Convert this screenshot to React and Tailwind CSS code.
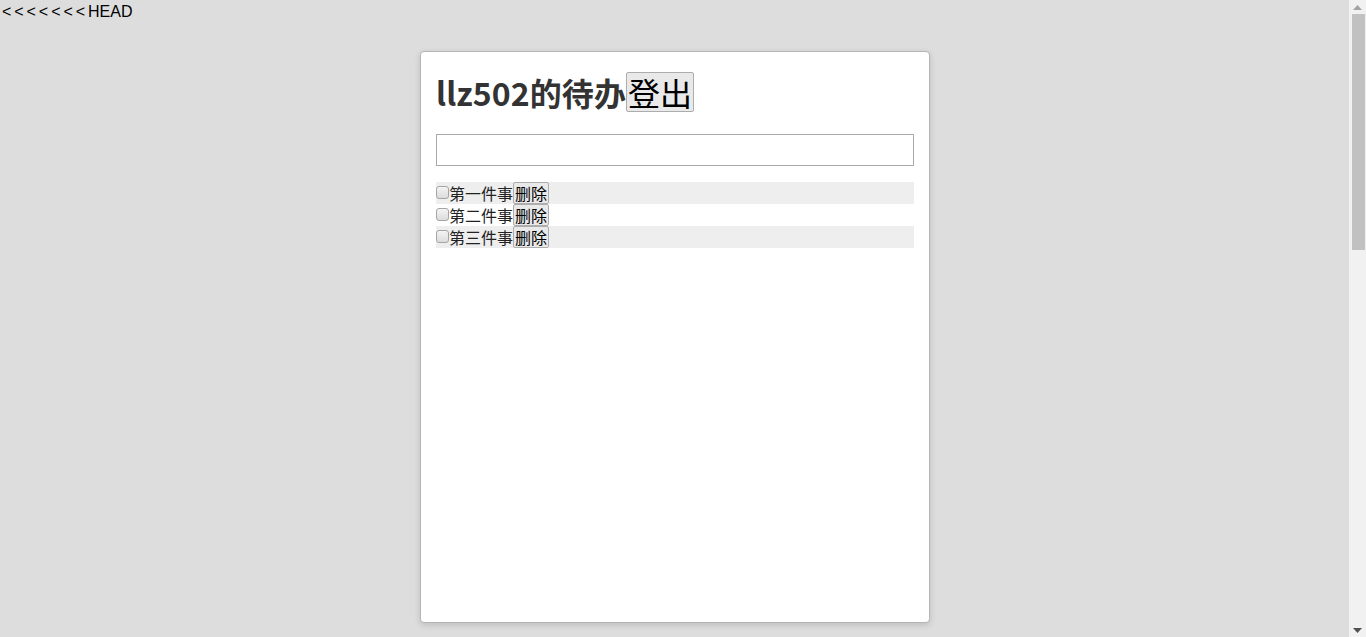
import React from "react";

const items = ["第一件事", "第二件事", "第三件事"];

function FakeScrollbar() {
  return (
    <div className="w-[17px] h-[637px] shrink-0 bg-[#f1f1f1] flex flex-col items-center">
      <div className="h-[14px] w-full flex items-center justify-center">
        <svg width="9" height="5" viewBox="0 0 9 5"><path d="M4.5 0 L9 5 L0 5 Z" fill="#a3a3a3" /></svg>
      </div>
      <div className="w-[13px] h-[236px] bg-[#c1c1c1] ml-[1px]" />
      <div className="flex-1" />
      <div className="h-[14px] w-full flex items-center justify-center">
        <svg width="9" height="5" viewBox="0 0 9 5"><path d="M0 0 L9 0 L4.5 5 Z" fill="#505050" /></svg>
      </div>
    </div>
  );
}

export default function App() {
  return (
    <div
      className="bg-[#dddddd] h-[637px] overflow-hidden flex text-black"
      style={{ fontFamily: '"Noto Sans CJK SC", "Noto Sans", sans-serif' }}
    >
      <div className="flex-1">
        <div
          className="text-[16px] leading-[21px] pl-[2px] pt-[1px] [word-spacing:-1.5px]"
          style={{ fontFamily: '"Liberation Sans", Arial, sans-serif' }}
        >
          &lt; &lt; &lt; &lt; &lt; &lt; &lt; HEAD
        </div>
        <div className="pt-[29px] pl-[1px]">
          <div className="mx-auto w-[510px] h-[572px] bg-white rounded-[4px] border border-[#b5b5b5] shadow-[0_2px_6px_rgba(0,0,0,0.15)] px-[15px] pt-[20px]">
            <div className="flex items-center h-[40px]">
              <h1 className="text-[32px] leading-[40px] font-bold text-[#333333] tracking-[0.1px]">llz502的待办</h1>
              <button className="h-[40px] px-[1px] text-[32px] leading-[36px] bg-[#e9e9e9] border border-[#adadad] rounded-[2px] text-black">登出</button>
            </div>
            <input
              type="text"
              className="block mt-[22px] w-full h-[32px] border border-[#a9a9a9] outline-none px-2"
            />
            <ul className="mt-[16px]">
              {items.map((t, i) => (
                <li
                  key={t}
                  className={`flex items-center h-[22px] text-[16px] leading-[20px] ${i % 2 === 0 ? "bg-[#eeeeee]" : "bg-white"}`}
                >
                  <span className="w-[13px] h-[13px] border border-[#a5a5a5] rounded-[3px] bg-gradient-to-b from-[#f4f4f4] to-[#dcdcdc] mb-[2px]" />
                  <span className="text-[#222]">{t}</span>
                  <button className="h-[22px] px-[1px] text-[16px] leading-[18px] bg-[#e9e9e9] border border-[#adadad] rounded-[2px] text-black">删除</button>
                </li>
              ))}
            </ul>
          </div>
        </div>
      </div>
      <FakeScrollbar />
    </div>
  );
}
